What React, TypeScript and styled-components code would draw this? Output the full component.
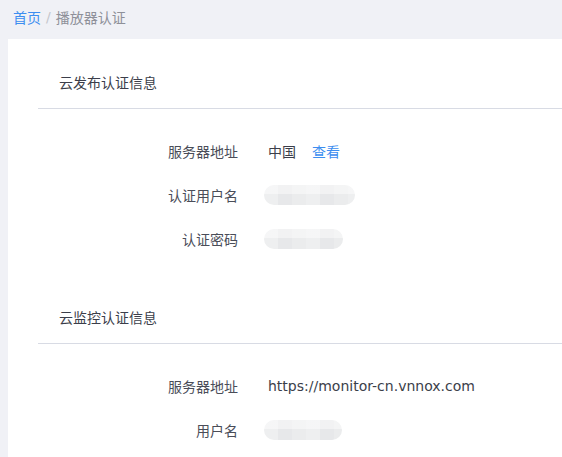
import * as React from 'react'
import styled, { createGlobalStyle } from 'styled-components';

const GlobalStyle = createGlobalStyle`
    html, body{
        margin: 0;
        padding: 0;
        background: #f0f1f6;
        font-family: "DejaVu Sans", "Noto Sans CJK SC", sans-serif;
        font-size: 14px;
        color: #3b3e4a;
    }
`;

interface IRow{
    label : string;
    value? : React.ReactNode;
    blurWidth? : number;
}

interface ISection{
    title : string;
    rows : IRow[];
}

export default function App() : React.ReactElement{

    /* Data */
    const sections : ISection[] = [
        {
            title: '云发布认证信息',
            rows: [
                { label: '服务器地址', value: <>中国<LinkText>查看</LinkText></> },
                { label: '认证用户名', blurWidth: 91 },
                { label: '认证密码', blurWidth: 79 },
            ]
        },
        {
            title: '云监控认证信息',
            rows: [
                { label: '服务器地址', value: 'https://monitor-cn.vnnox.com' },
                { label: '用户名', blurWidth: 78 },
            ]
        }
    ];

    return (<>
        <GlobalStyle/>
        <Breadcrumb>
            <Crumb $active>首页</Crumb>
            <Separator>/</Separator>
            <Crumb>播放器认证</Crumb>
        </Breadcrumb>
        <Card>
            {sections.map((section) => (
                <Section key={section.title}>
                    <SectionHeader>{section.title}</SectionHeader>
                    <Rows>
                        {section.rows.map((row) => (
                            <Row key={row.label}>
                                <Label>{row.label}</Label>
                                <Value>
                                    {row.blurWidth ? <Blurred $width={row.blurWidth}/> : row.value}
                                </Value>
                            </Row>
                        ))}
                    </Rows>
                </Section>
            ))}
        </Card>
    </>);
}

const Breadcrumb = styled.div`
    display: flex;
    align-items: center;
    height: 39px;
    padding: 0 13px 5px;
    box-sizing: border-box;
`;

const Crumb = styled.span<{ $active?: boolean }>`
    color: ${p => p.$active ? '#3d8ef0' : '#8e9099'};
`;

const Separator = styled.span`
    color: #c4c6cc;
    margin: 0 5px;
`;

const Card = styled.div`
    margin-left: 8px;
    background: #ffffff;
    padding-top: 19px;
`;

const Section = styled.div`
    margin-left: 30px;
`;

const SectionHeader = styled.div`
    height: 50px;
    line-height: 50px;
    padding-left: 21px;
    border-bottom: 1px solid #d8dbe4;
    color: #3b3e4a;
`;

const Rows = styled.div`
    padding: 20px 0 32px;
`;

const Row = styled.div`
    display: flex;
    align-items: center;
    height: 44px;
`;

const Label = styled.div`
    width: 200px;
    text-align: right;
    color: #4a4d58;
`;

const Value = styled.div`
    margin-left: 30px;
    display: flex;
    align-items: center;
    color: #3b3e4a;
`;

const LinkText = styled.span`
    color: #3d8ef0;
    margin-left: 16px;
    cursor: pointer;
`;

const Blurred = styled.div<{ $width: number }>`
    width: ${p => p.$width}px;
    height: 20px;
    margin-left: -4px;
    border-radius: 10px;
    background:
        linear-gradient(to bottom, rgba(255,255,255,0.45) 0 45%, transparent 45%),
        repeating-linear-gradient(to right, #eeeff0 0 14px, #e7e8ea 14px 28px, #ebeced 28px 42px);
    filter: blur(0.6px);
`;
